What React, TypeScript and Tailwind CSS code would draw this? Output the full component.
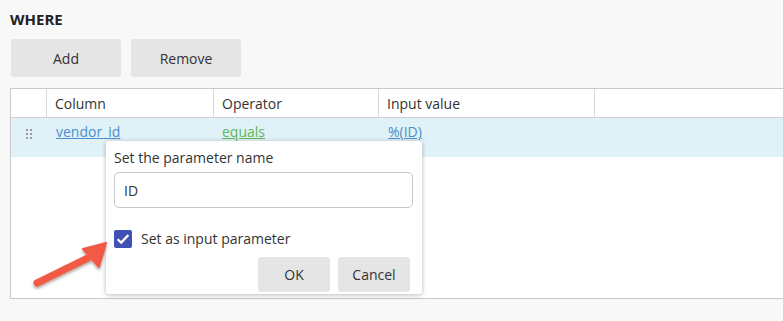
import React from "react";

export default function App() {
  const font = { fontFamily: '"Open Sans", "Noto Sans", sans-serif' };
  return (
    <div className="w-[783px] h-[321px] bg-[#f8f8f8] overflow-hidden relative text-[#333]" style={font}>
      <div className="pl-[10px] pt-[9px]">
        <div className="text-[15px] font-bold leading-[20px] text-[#222]">WHERE</div>
        <div className="flex gap-[10px] mt-[10px] pl-px">
          <button className="w-[110px] h-[38px] bg-[#e5e5e5] rounded-[3px] text-[14px] text-[#333]">Add</button>
          <button className="w-[110px] h-[38px] bg-[#e5e5e5] rounded-[3px] text-[14px] text-[#333]">Remove</button>
        </div>
        <div className="relative mt-[11px] w-[773px] h-[211px] bg-white border-l border-t border-b border-[#c9c9c9]">
          <div className="flex h-[29px] border-b border-[#d0d0d0] text-[14px]">
            <div className="w-[36px] border-r border-[#d9d9d9]"></div>
            <div className="w-[167px] border-r border-[#d9d9d9] pl-[8px] flex items-center">Column</div>
            <div className="w-[165px] border-r border-[#d9d9d9] pl-[8px] flex items-center">Operator</div>
            <div className="w-[216px] border-r border-[#d9d9d9] pl-[8px] flex items-center">Input value</div>
            <div className="flex-1"></div>
          </div>
          <div className="flex h-[39px] bg-[#e0f1f7] text-[14px]">
            <div className="w-[36px] pl-[15px] pt-[11px]">
              <div className="grid grid-cols-2 gap-[2px] w-[5px]">
                {Array.from({ length: 6 }).map((_, i) => (
                  <div key={i} className="w-[2px] h-[2px] bg-[#9a9a9a]" />
                ))}
              </div>
            </div>
            <div className="w-[167px] pl-[9px] pt-[3px]">
              <span className="underline text-[#4a8fcb] decoration-[#4a8fcb]">vendor_id</span>
            </div>
            <div className="w-[165px] pl-[8px] pt-[3px]">
              <span className="underline text-[#5cb85c]">equals</span>
            </div>
            <div className="w-[216px] pl-[9px] pt-[3px]">
              <span className="underline text-[#4a8fcb]">%(ID)</span>
            </div>
          </div>

          <div className="absolute left-[95px] top-[52px] w-[316px] h-[153px] bg-white rounded-[2px] shadow-[0_1px_5px_rgba(0,0,0,0.28)] px-[8px] pt-[7px]">
            <div className="text-[14px] leading-[20px]">Set the parameter name</div>
            <div className="mt-[4px] w-[299px] h-[36px] border border-[#c8c8c8] rounded-[5px] flex items-center pl-[9px] text-[14px]">
              ID
            </div>
            <div className="mt-[20px] flex items-center gap-[9px]">
              <div className="w-[18px] h-[18px] rounded-[2px] bg-[#3f51b5] flex items-center justify-center">
                <svg width="16" height="16" viewBox="0 0 16 16">
                  <path d="M2.6 8.2 L6.2 11.6 L13.4 4" fill="none" stroke="white" strokeWidth="2.2" />
                </svg>
              </div>
              <span className="text-[14px]">Set as input parameter</span>
            </div>
            <div className="flex justify-end gap-[8px] mt-[8px] pr-[4px]">
              <button className="w-[72px] h-[35px] bg-[#e5e5e5] rounded-[3px] text-[14px] text-[#333]">OK</button>
              <button className="w-[72px] h-[35px] bg-[#e5e5e5] rounded-[3px] text-[14px] text-[#333]">Cancel</button>
            </div>
          </div>
        </div>
      </div>

      <svg className="absolute left-0 top-0 pointer-events-none" width="783" height="321">
        <defs>
          <filter id="sh" x="-20%" y="-20%" width="140%" height="140%">
            <feDropShadow dx="0" dy="2" stdDeviation="1.5" floodColor="#000" floodOpacity="0.35" />
          </filter>
        </defs>
        <g filter="url(#sh)">
          <line x1="37" y1="283" x2="90" y2="257" stroke="#f25a45" strokeWidth="7" strokeLinecap="round" />
          <polygon points="106,243 83,249 99,267" fill="#f25a45" stroke="#f25a45" strokeWidth="2" strokeLinejoin="round" />
        </g>
      </svg>
    </div>
  );
}
